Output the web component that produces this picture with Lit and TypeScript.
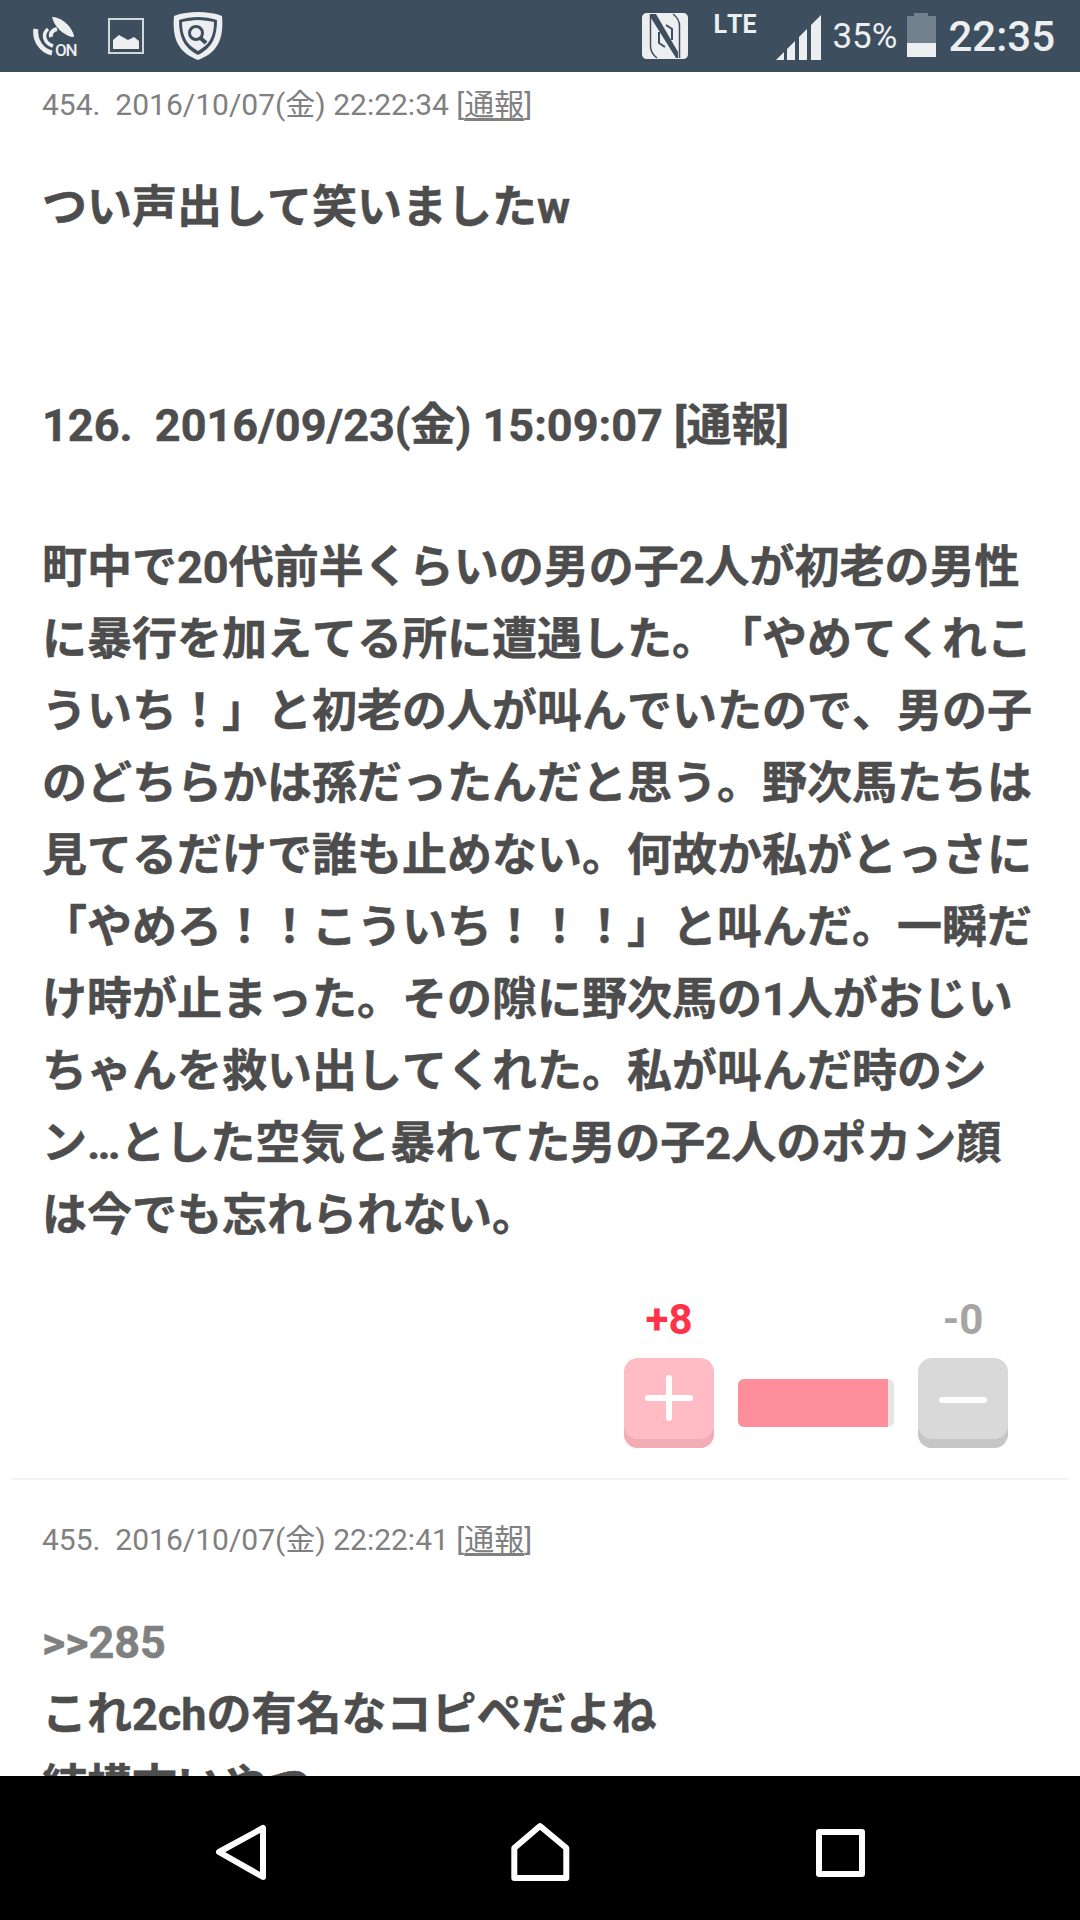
import { LitElement, html, css } from "lit";
import { customElement } from "lit/decorators.js";

const lines = [
  "町中で20代前半くらいの男の子2人が初老の男性",
  "に暴行を加えてる所に遭遇した。「やめてくれこ",
  "ういち！」と初老の人が叫んでいたので、男の子",
  "のどちらかは孫だったんだと思う。野次馬たちは",
  "見てるだけで誰も止めない。何故か私がとっさに",
  "「やめろ！！こういち！！！」と叫んだ。一瞬だ",
  "け時が止まった。その隙に野次馬の1人がおじい",
  "ちゃんを救い出してくれた。私が叫んだ時のシ",
  "ン…とした空気と暴れてた男の子2人のポカン顔",
  "は今でも忘れられない。",
];

@customElement("app-root")
export class AppRoot extends LitElement {
  static styles = css`
    :host {
      display: flex;
      flex-direction: column;
      width: 1080px;
      height: 1920px;
      overflow: hidden;
      background: #fff;
      font-family: Roboto, "Noto Sans CJK JP", sans-serif;
      text-spacing-trim: space-all;
      font-kerning: none;
    }
    .status {
      flex: none;
      height: 72px;
      background: #3d4f5f;
      color: #eceef0;
      display: flex;
      align-items: flex-start;
    }
    .status svg { display: block; flex: none; }
    .nfc { position: relative; margin: 16px 0 0 33px; width: 44px; height: 41px; flex: none; }
    .on {
      position: absolute;
      left: 22px;
      top: 26px;
      font-size: 17px;
      font-weight: 500;
      line-height: 16px;
      letter-spacing: -1.2px;
      white-space: nowrap;
    }
    .pic { margin: 18px 0 0 31px; }
    .shield { margin: 11px 0 0 29px; }
    .spacer { flex: 1; }
    .nmark { margin: 13px 0 0 0; }
    .lte { margin: 11px 0 0 25px; font-size: 25px; font-weight: 700; line-height: 28px; width: 42px; white-space: nowrap; }
    .signal { margin: 15px 0 0 21px; }
    .pct { margin: 17px 0 0 11px; font-size: 35px; line-height: 40px; width: 66px; white-space: nowrap; }
    .batt { margin: 13px 0 0 9px; }
    .clock { margin: 14px 25px 0 12px; font-size: 42px; font-weight: 500; line-height: 46px; white-space: nowrap; }

    .content {
      flex: 1;
      min-height: 0;
      overflow: hidden;
    }
    .meta {
      height: 66px;
      padding: 0 42px;
      font-size: 30px;
      line-height: 66px;
      color: #808080;
      white-space: pre;
    }
    .meta u { text-underline-offset: 3px; }
    .body {
      padding: 0 42px;
      font-size: 45px;
      font-weight: 700;
      line-height: 72px;
      color: #4d4d4d;
      white-space: nowrap;
      -webkit-text-stroke: 0.5px currentColor;
    }
    .line { display: block; height: 72px; }
    .gap-a { margin-top: 34px; }
    .head { margin-top: 146px; white-space: pre; }
    .main { margin-top: 70px; }
    .anchor { color: #808080; }

    .votes {
      display: grid;
      grid-template-columns: 90px 156px 90px;
      column-gap: 24px;
      justify-content: end;
      align-items: center;
      padding-right: 72px;
      margin-top: 35px;
    }
    .count {
      height: 66px;
      margin-bottom: 5px;
      font-size: 42px;
      font-weight: 700;
      line-height: 66px;
      text-align: center;
    }
    .count.up { color: #ff3247; }
    .count.down { color: #a5a5a5; }
    .btn {
      width: 90px;
      height: 90px;
      border-radius: 14px;
    }
    .btn.up { background: #ffbcc4; box-shadow: inset 0 -9px 0 #f3abb4; }
    .btn.down { background: #d9d9d9; box-shadow: inset 0 -9px 0 #c6c6c6; }
    .btn svg { display: block; }
    .bar {
      height: 48px;
      border-radius: 6px;
      background: #e5e5e5;
      overflow: hidden;
    }
    .bar div { height: 100%; background: #ff8e9b; }
    .rule {
      height: 2px;
      margin: 30px 12px 0;
      background: #f2f2f3;
    }
    .meta.second { margin-top: 27px; }
    .ref { margin-top: 36px; line-height: 68px; height: 70px; }
    .nav {
      flex: none;
      height: 144px;
      background: #000;
      display: flex;
      align-items: flex-start;
      padding-left: 214px;
    }
    .nav svg { display: block; flex: none; }
    .back { margin-top: 47px; }
    .home { margin: 44px 0 0 241px; }
    .recent { margin: 51px 0 0 243px; }
  `;

  render() {
    return html`
      <div class="status">
        <div class="nfc">
          <svg width="44" height="41" viewBox="0 0 44 41" fill="none">
            <path d="M19 1C29 1 39 11 41 20C41 21 40 21 39 21C30 19 21 10 19 1Z" fill="#eceef0" />
            <path d="M24 13C20 14 17 17 18 21" stroke="#eceef0" stroke-width="4" />
            <path d="M15 13C9 18 11 27 20 30" stroke="#eceef0" stroke-width="3.500" />
            <path d="M3 13C1 24 9 35 19 37" stroke="#eceef0" stroke-width="5" />
          </svg>
          <span class="on">ON</span>
        </div>
        <svg class="pic" width="36" height="36" viewBox="0 0 36 36" fill="#eceef0">
          <path fill-rule="evenodd" d="M0 0H36V36H0Z M2 2V34H34V2Z" opacity="0.85" />
          <path d="M5 31V22L11 17L20 22L26 19L31 23V31Z" />
        </svg>
        <svg class="shield" width="50" height="50" viewBox="0 0 50 50" fill="none">
          <path fill="#eceef0" fill-rule="evenodd" d="M25 1C33 1 42 2 49 5C50 16 49 26 45 33C41 41 33 46 25 49C17 46 9 41 5 33C1 26 0 16 1 5C8 2 17 1 25 1Z M25 6C19 6 12 7 6 9C6 17 7 24 10 30C13 36 19 41 25 44C31 41 37 36 40 30C43 24 44 17 44 9C38 7 31 6 25 6Z" />
          <path fill="#eceef0" d="M25 9C30 9 36 10 41 11C41 18 40 24 37 29C35 33 30 37 25 40C20 37 15 33 13 29C10 24 9 18 9 11C14 10 20 9 25 9Z" />
          <circle cx="23" cy="22" r="6.500" stroke="#3d4f5f" stroke-width="3" />
          <path d="M27.500 27L33 32" stroke="#3d4f5f" stroke-width="4" />
        </svg>
        <div class="spacer"></div>
        <svg class="nmark" width="46" height="46" viewBox="0 0 46 46">
          <path fill="#eceef0" d="M5 0H41C44 0 46 2 46 5V41C46 44 44 46 41 46H5C2 46 0 44 0 41V5C0 2 2 0 5 0Z" />
          <path fill="none" stroke="#3d4f5f" stroke-width="1.500" d="M8.500 1V33C8.500 38 11 42 15 45M37.500 45V13C37.500 8 35 4 31 1" />
          <path fill="#3d4f5f" d="M9 1H14L36 39V45H34L9 5Z" />
          <path fill="none" stroke="#3d4f5f" stroke-width="2" d="M17 19V30L23 34M30 27V16L24 12" />
        </svg>
        <div class="lte">LTE</div>
        <svg class="signal" width="45" height="45" viewBox="0 0 45 45" fill="#eceef0">
          <path d="M0 45L8 37V45Z M11 34L19 26V45H11Z M23 22L31 14V45H23Z M35 10L45 0V45H35Z" />
        </svg>
        <div class="pct">35%</div>
        <svg class="batt" width="29" height="44" viewBox="0 0 29 44">
          <path d="M7 0H21V3H29V44H0V3H7Z" fill="#73818d" />
          <path d="M0 30H29V44H0Z" fill="#eceef0" />
        </svg>
        <div class="clock">22:35</div>
      </div>

      <div class="content">
        <div class="meta">454.  2016/10/07(金) 22:22:34 [<u>通報</u>]</div>
        <div class="body gap-a">つい声出して笑いましたw</div>
        <div class="body head">126.  2016/09/23(金) 15:09:07 [通報]</div>
        <div class="body main">
          ${lines.map((l) => html`<span class="line">${l}</span>`)}
        </div>
        <div class="votes">
          <div class="count up">+8</div>
          <div></div>
          <div class="count down">-0</div>
          <div class="btn up">
            <svg width="90" height="90" viewBox="0 0 90 90">
              <path d="M24 40H66M45 20V60" stroke="#fff" stroke-width="6" stroke-linecap="round" fill="none" />
            </svg>
          </div>
          <div class="bar"><div style="width:${(8 / 8.32) * 100}%"></div></div>
          <div class="btn down">
            <svg width="90" height="90" viewBox="0 0 90 90">
              <path d="M24 42H66" stroke="#fff" stroke-width="6" stroke-linecap="round" fill="none" />
            </svg>
          </div>
        </div>
        <div class="rule"></div>
        <div class="meta second">455.  2016/10/07(金) 22:22:41 [<u>通報</u>]</div>
        <div class="body ref anchor">&gt;&gt;285</div>
        <div class="body">これ2chの有名なコピペだよね</div>
        <div class="body">結構古いやつ</div>
      </div>

      <div class="nav">
        <svg class="back" width="54" height="60" viewBox="0 0 54 60" fill="none" stroke="#fff" stroke-width="6" stroke-linejoin="round">
          <path d="M5 29L49 5V54Z" />
        </svg>
        <svg class="home" width="62" height="64" viewBox="0 0 62 64" fill="none" stroke="#fff" stroke-width="6" stroke-linejoin="round">
          <path d="M31 6L57.300 28V58H5.300V28Z" />
        </svg>
        <svg class="recent" width="53" height="52" viewBox="0 0 53 52" fill="none" stroke="#fff" stroke-width="6" stroke-linejoin="round">
          <path d="M5 5H48V47H5Z" />
        </svg>
      </div>
    `;
  }
}
